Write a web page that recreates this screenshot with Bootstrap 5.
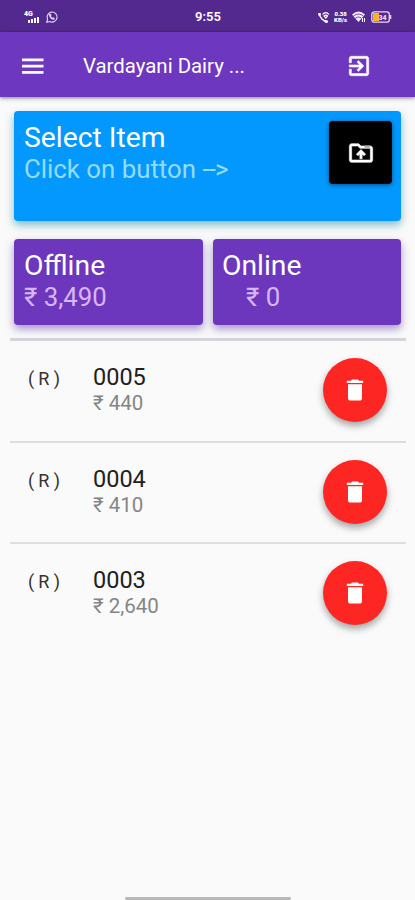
<!DOCTYPE html>
<html lang="en">
<head>
<meta charset="utf-8">
<meta name="viewport" content="width=device-width, initial-scale=1">
<title>Vardayani Dairy</title>
<link href="https://cdn.jsdelivr.net/npm/bootstrap@5.3.0/dist/css/bootstrap.min.css" rel="stylesheet">
<style>
body{font-family:Roboto,"Noto Sans",sans-serif;background:#fafafa;color:#212121;height:900px;overflow:hidden}
svg{display:block;flex:none}
.status{height:32px;background:#54298f;padding:1px 23px 0 24px}
.status .col-side{width:130px}
.clock{font-size:13px;font-weight:600;line-height:16px}
.tiny{font-size:6px;line-height:6px;font-weight:900}
.appbar{height:65px;background:#6d37bf;padding:2px 43px 0 20px;box-shadow:0 1px 4px rgba(0,0,0,.5)}
.brand{font-size:20.4px;line-height:24px;margin-left:37px}
.content{padding:14px 14px 0}
.tile{border-radius:4px;color:#fff}
.tile-blue{background:#0398fd;height:110px;padding:10px 9px 0 10px;box-shadow:0 4px 9px rgba(0,125,150,.5)}
.tile-purple{background:#6d37bd;height:86px;padding:10px 9px 0 10px;box-shadow:0 4px 9px rgba(85,45,160,.5)}
.tile-purple + .tile-purple{padding-left:9px}
.big{font-size:28.3px;line-height:33px;white-space:nowrap}
.sub{font-size:25.8px;line-height:31px;white-space:nowrap}
.tile-blue .sub{color:#94dcff}
.tile-purple .sub{color:#d9b5fa}
.arrow{letter-spacing:-.8px}
.upload{width:63px;height:63px;background:#000;border:0;border-radius:4px;box-shadow:0 1px 4px rgba(0,0,0,.5)}
.pair{display:grid;grid-template-columns:189px 188px;gap:10px;margin-top:18px}
.entries{margin:13px 9px 0 10px;border-top:3px solid #d7d2e0}
.entry{height:101.5px;border-bottom:2px solid #dedede;padding:17px 19px 0 18px}
.entry:last-child{border-bottom:0}
.kind{width:65px;font-size:18px;line-height:22px;letter-spacing:4.2px;margin-top:10px;color:#333}
.code{font-size:23.5px;line-height:28px;margin-top:5px}
.price{font-size:20.5px;line-height:25px;color:#858585}
.del{width:64px;height:64px;border:0;background:#fe2622;border-radius:50%;box-shadow:0 4px 7px rgba(0,0,0,.35)}
.homebar{width:166px;height:3px;border-radius:2px;background:#b8b8b8}
.screen{height:900px}
</style>
<script src="https://cdn.jsdelivr.net/npm/bootstrap@5.3.0/dist/js/bootstrap.bundle.min.js"></script>
</head>
<body>
<div class="screen d-flex flex-column">
  <div class="status d-flex align-items-center justify-content-between text-white">
    <div class="col-side d-flex align-items-center">
      <svg width="17" height="14" viewBox="0 0 17 14" fill="#fff"><text x="0" y="6" font-size="7" font-weight="900">4G</text><path d="M4 10h2v3H4zM7 9h2v4H7zM10 8h2v5h-2zM13 7h2v6h-2z"/></svg>
      <svg class="ms-1" width="14" height="14" viewBox="0 0 14 14" fill="none" stroke="#e6d8f5" stroke-width="1.1"><path d="M1.800 12.200l.8-3A5 5 0 1 1 4.800 11.500z"/><path d="M4.800 4.200c-.5 2.500 2 5 4.600 4.800M4.800 4.200l1.200 1.500M9.400 9L8 7.800" stroke-width="1.6"/></svg>
    </div>
    <div class="clock">9:55</div>
    <div class="col-side d-flex align-items-center justify-content-end">
      <svg width="12" height="12" viewBox="0 0 12 12" fill="none" stroke="#fff"><path d="M1.300 2c0 4.500 4 8.500 8.500 8.800" stroke-width="1.500"/><path d="M1.500 2v2.500M7 10.300l2.500.5" stroke-width="2.400"/><path d="M4.500 3.500c2-2.500 4.500-2.500 6.500 0M6 5c1-1.200 2.500-1.200 3.500 0L7.800 7z" stroke-width="1.200"/></svg>
      <div class="tiny text-center ms-1">0.38<br>KB/s</div>
      <svg class="ms-1" width="16" height="13" viewBox="0 0 16 13"><path d="M1 4.500Q7.500-1.500 14 4.500L7.500 12z" fill="#f3eaff"/><path d="M2.500 6q5-4 10 0M4.500 8q3-2.300 6 0" fill="none" stroke="#54298f" stroke-width=".8"/><path d="M11.500 8v4M13.500 8v4" stroke="#fff"/></svg>
      <svg class="ms-1" width="21" height="12" viewBox="0 0 21 12"><rect x=".8" y=".8" width="17.500" height="10.400" rx="2.500" fill="none" stroke="#e8dcf5" stroke-width="1.300"/><path d="M2 2h6v8H2z" fill="#ffb21c"/><text x="7.500" y="8.500" font-size="7" font-weight="900" fill="#e8dcf5">34</text><path d="M19.700 4v4" stroke="#e8dcf5" stroke-width="1.200"/></svg>
    </div>
  </div>
  <nav class="appbar d-flex align-items-center text-white">
    <svg width="26" height="26" viewBox="0 0 26 26" fill="#fff"><path d="M2 5.500h21.500v2.700H2zM2 11.800h21.500v2.700H2zM2 18h21.500v2.700H2z"/></svg>
    <div class="brand">Vardayani Dairy ...</div>
    <svg class="ms-auto" width="26" height="26" viewBox="0 0 24 24" fill="#fff"><path d="M10.090 15.590L11.500 17l5-5-5-5-1.410 1.410L12.670 11H3v2h9.670l-2.580 2.590zM19 3H5a2 2 0 0 0-2 2v4h2V5h14v14H5v-4H3v4a2 2 0 0 0 2 2h14c1.100 0 2-.9 2-2V5c0-1.100-.9-2-2-2z" stroke="#fff" stroke-width=".5"/></svg>
  </nav>
  <main class="flex-grow-1">
    <div class="content">
      <section class="tile tile-blue d-flex justify-content-between align-items-start">
        <div><div class="big">Select Item</div><div class="sub">Click on button <span class="arrow">--&gt;</span></div></div>
        <button class="upload d-flex align-items-center justify-content-center p-0" aria-label="Upload"><svg width="28" height="28" viewBox="0 0 24 24" fill="#fff"><path d="M20 6h-8l-2-2H4c-1.100 0-1.990.9-1.990 2L2 18c0 1.100.9 2 2 2h16c1.100 0 2-.9 2-2V8c0-1.100-.9-2-2-2zm0 12H4V6h5.170l2 2H20v10zM9.410 14.420L11 12.840V17h2v-4.160l1.590 1.590L16 13.010 12.010 9 8 13.010z" stroke="#fff" stroke-width=".5"/><path d="M15 5.500h4.500v2H15z" fill="#aaa"/></svg></button>
      </section>
      <section class="pair">
        <div class="tile tile-purple"><div class="big">Offline</div><div class="sub">₹ 3,490</div></div>
        <div class="tile tile-purple"><div class="big">Online</div><div class="sub ps-4">₹ 0</div></div>
      </section>
    </div>
    <div class="entries">
      <div class="entry d-flex align-items-start"><div class="kind">(R)</div><div><div class="code">0005</div><div class="price">₹ 440</div></div>
        <button class="del ms-auto d-flex align-items-center justify-content-center p-0" aria-label="Delete"><svg width="28" height="28" viewBox="0 0 24 24" fill="#fff"><path d="M6 19c0 1.100.9 2 2 2h8c1.100 0 2-.9 2-2V7H6v12zM19 4h-3.500l-1-1h-5l-1 1H5v2h14V4z"/></svg></button></div>
      <div class="entry d-flex align-items-start"><div class="kind">(R)</div><div><div class="code">0004</div><div class="price">₹ 410</div></div>
        <button class="del ms-auto d-flex align-items-center justify-content-center p-0" aria-label="Delete"><svg width="28" height="28" viewBox="0 0 24 24" fill="#fff"><path d="M6 19c0 1.100.9 2 2 2h8c1.100 0 2-.9 2-2V7H6v12zM19 4h-3.500l-1-1h-5l-1 1H5v2h14V4z"/></svg></button></div>
      <div class="entry d-flex align-items-start"><div class="kind">(R)</div><div><div class="code">0003</div><div class="price">₹ 2,640</div></div>
        <button class="del ms-auto d-flex align-items-center justify-content-center p-0" aria-label="Delete"><svg width="28" height="28" viewBox="0 0 24 24" fill="#fff"><path d="M6 19c0 1.100.9 2 2 2h8c1.100 0 2-.9 2-2V7H6v12zM19 4h-3.500l-1-1h-5l-1 1H5v2h14V4z"/></svg></button></div>
    </div>
  </main>
  <div class="homebar mx-auto"></div>
</div>
</body>
</html>
